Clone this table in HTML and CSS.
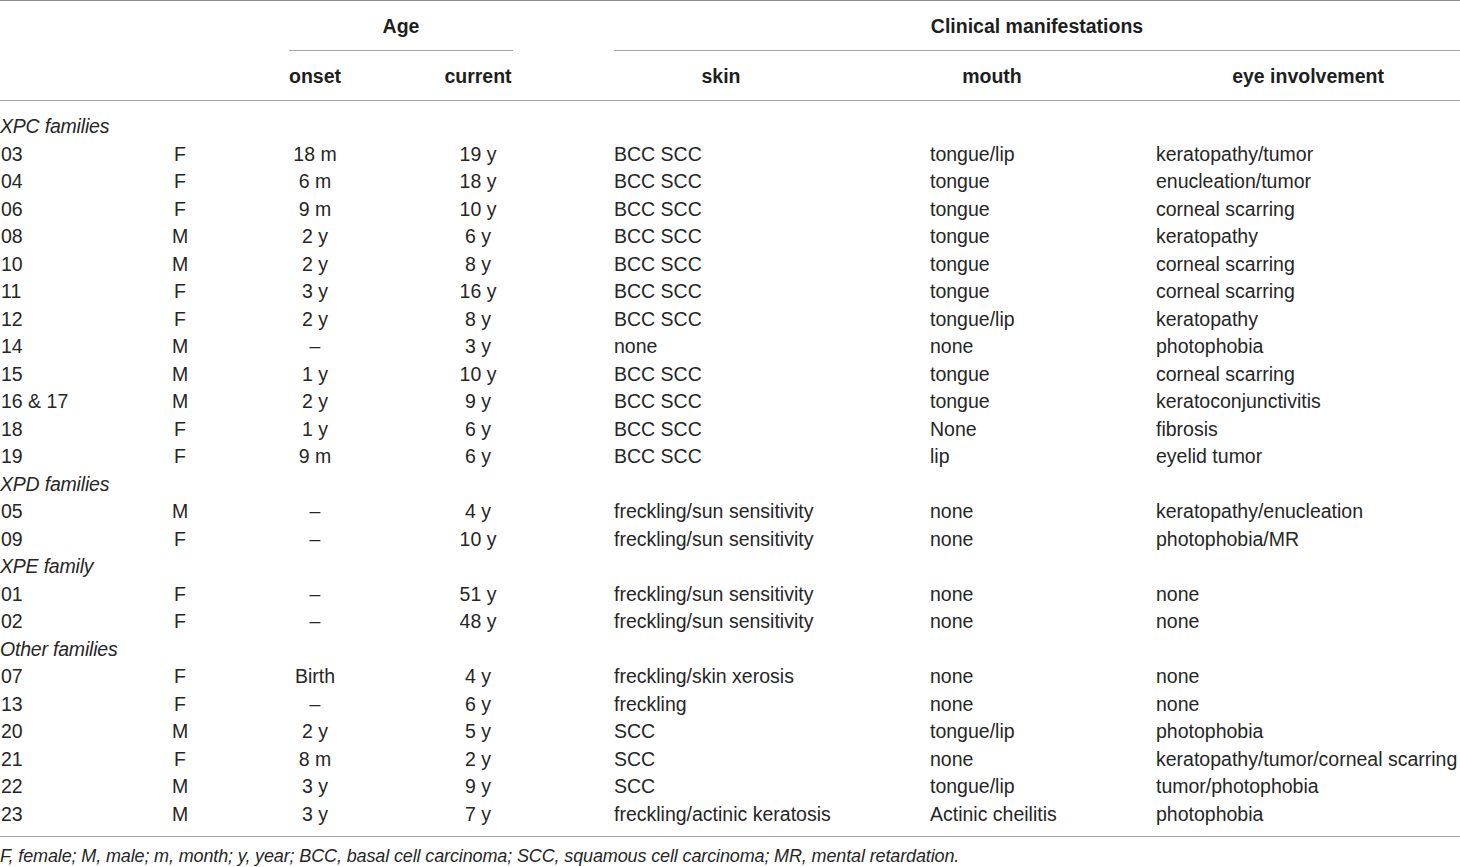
FILE: index.html
```html
<!DOCTYPE html>
<html>
<head>
<meta charset="utf-8">
<link rel="stylesheet" href="styles.css">
</head>
<body>
<div class="wrap">
<table class="tbl">
  <colgroup>
    <col class="c-id"><col class="c-sex"><col class="c-onset"><col class="c-cur"><col class="c-skin"><col class="c-mouth"><col class="c-eye">
  </colgroup>
  <thead>
    <tr class="h1">
      <th></th><th></th>
      <th colspan="2"><div class="grp grp-age">Age</div></th>
      <th colspan="3"><div class="grp grp-clin">Clinical manifestations</div></th>
    </tr>
    <tr class="h2">
      <th></th><th></th>
      <th>onset</th><th>current</th>
      <th class="skin">skin</th><th>mouth</th><th>eye involvement</th>
    </tr>
  </thead>
  <tbody>
    <tr class="grp-row first"><td colspan="7">XPC families</td></tr>
    <tr><td>03</td><td>F</td><td>18 m</td><td>19 y</td><td>BCC SCC</td><td>tongue/lip</td><td>keratopathy/tumor</td></tr>
    <tr><td>04</td><td>F</td><td>6 m</td><td>18 y</td><td>BCC SCC</td><td>tongue</td><td>enucleation/tumor</td></tr>
    <tr><td>06</td><td>F</td><td>9 m</td><td>10 y</td><td>BCC SCC</td><td>tongue</td><td>corneal scarring</td></tr>
    <tr><td>08</td><td>M</td><td>2 y</td><td>6 y</td><td>BCC SCC</td><td>tongue</td><td>keratopathy</td></tr>
    <tr><td>10</td><td>M</td><td>2 y</td><td>8 y</td><td>BCC SCC</td><td>tongue</td><td>corneal scarring</td></tr>
    <tr><td>11</td><td>F</td><td>3 y</td><td>16 y</td><td>BCC SCC</td><td>tongue</td><td>corneal scarring</td></tr>
    <tr><td>12</td><td>F</td><td>2 y</td><td>8 y</td><td>BCC SCC</td><td>tongue/lip</td><td>keratopathy</td></tr>
    <tr><td>14</td><td>M</td><td>–</td><td>3 y</td><td>none</td><td>none</td><td>photophobia</td></tr>
    <tr><td>15</td><td>M</td><td>1 y</td><td>10 y</td><td>BCC SCC</td><td>tongue</td><td>corneal scarring</td></tr>
    <tr><td>16 &amp; 17</td><td>M</td><td>2 y</td><td>9 y</td><td>BCC SCC</td><td>tongue</td><td>keratoconjunctivitis</td></tr>
    <tr><td>18</td><td>F</td><td>1 y</td><td>6 y</td><td>BCC SCC</td><td>None</td><td>fibrosis</td></tr>
    <tr><td>19</td><td>F</td><td>9 m</td><td>6 y</td><td>BCC SCC</td><td>lip</td><td>eyelid tumor</td></tr>
    <tr class="grp-row"><td colspan="7">XPD families</td></tr>
    <tr><td>05</td><td>M</td><td>–</td><td>4 y</td><td>freckling/sun sensitivity</td><td>none</td><td>keratopathy/enucleation</td></tr>
    <tr><td>09</td><td>F</td><td>–</td><td>10 y</td><td>freckling/sun sensitivity</td><td>none</td><td>photophobia/MR</td></tr>
    <tr class="grp-row"><td colspan="7">XPE family</td></tr>
    <tr><td>01</td><td>F</td><td>–</td><td>51 y</td><td>freckling/sun sensitivity</td><td>none</td><td>none</td></tr>
    <tr><td>02</td><td>F</td><td>–</td><td>48 y</td><td>freckling/sun sensitivity</td><td>none</td><td>none</td></tr>
    <tr class="grp-row"><td colspan="7">Other families</td></tr>
    <tr><td>07</td><td>F</td><td>Birth</td><td>4 y</td><td>freckling/skin xerosis</td><td>none</td><td>none</td></tr>
    <tr><td>13</td><td>F</td><td>–</td><td>6 y</td><td>freckling</td><td>none</td><td>none</td></tr>
    <tr><td>20</td><td>M</td><td>2 y</td><td>5 y</td><td>SCC</td><td>tongue/lip</td><td>photophobia</td></tr>
    <tr><td>21</td><td>F</td><td>8 m</td><td>2 y</td><td>SCC</td><td>none</td><td>keratopathy/tumor/corneal scarring</td></tr>
    <tr><td>22</td><td>M</td><td>3 y</td><td>9 y</td><td>SCC</td><td>tongue/lip</td><td>tumor/photophobia</td></tr>
    <tr class="last"><td>23</td><td>M</td><td>3 y</td><td>7 y</td><td>freckling/actinic keratosis</td><td>Actinic cheilitis</td><td>photophobia</td></tr>
  </tbody>
</table>
<p class="foot">F, female; M, male; m, month; y, year; BCC, basal cell carcinoma; SCC, squamous cell carcinoma; MR, mental retardation.</p>
</div>
</body>
</html>
```

FILE: styles.css
```css
html, body {
  margin: 0;
  padding: 0;
  background: #ffffff;
}
.wrap {
  width: 1460px;
  font-family: "Liberation Sans", Arial, sans-serif;
  font-size: 19.5px;
  color: #262626;
}
.tbl {
  width: 1460px;
  table-layout: fixed;
  border-collapse: collapse;
  border-top: 1px solid #8c8c8c;
}
.c-id { width: 130px; }
.c-sex { width: 100px; }
.c-onset { width: 170px; }
.c-cur { width: 156px; }
.c-skin { width: 272px; }
.c-mouth { width: 328px; }
.c-eye { width: 304px; }

th, td {
  padding: 0;
  white-space: nowrap;
}
th {
  font-weight: bold;
  color: #1e1e1e;
  text-align: center;
}
.h1 th {
  height: 49px;
  vertical-align: bottom;
}
.grp {
  line-height: 50px;
  border-bottom: 1px solid #a6a6a6;
  box-sizing: border-box;
  height: 50px;
}
.grp-age { margin: 0 43px 0 59px; }
.grp-clin { margin-left: 58px; }
.h2 th {
  height: 47px;
  padding-top: 2px;
  line-height: 47px;
  border-bottom: 1px solid #a6a6a6;
}
.h2 th.skin { padding-left: 58px; }

td {
  height: 27.5px;
  line-height: 27.5px;
  vertical-align: middle;
}
td:nth-child(2), td:nth-child(3), td:nth-child(4) { text-align: center; }
td:nth-child(1) { padding-left: 1px; }
td:nth-child(5) { padding-left: 58px; }
td:nth-child(6) { padding-left: 102px; overflow: visible; }
.grp-row td {
  font-style: italic;
  text-align: left;
  padding-left: 0;
  letter-spacing: -0.2px;
}
.first td {
  padding-top: 12px;
}
.last td {
  padding-bottom: 8px;
  border-bottom: 1px solid #a6a6a6;
}
.foot {
  margin: 0;
  padding-top: 7px;
  line-height: 24px;
  font-size: 18px;
  letter-spacing: -0.13px;
  font-style: italic;
}
```
